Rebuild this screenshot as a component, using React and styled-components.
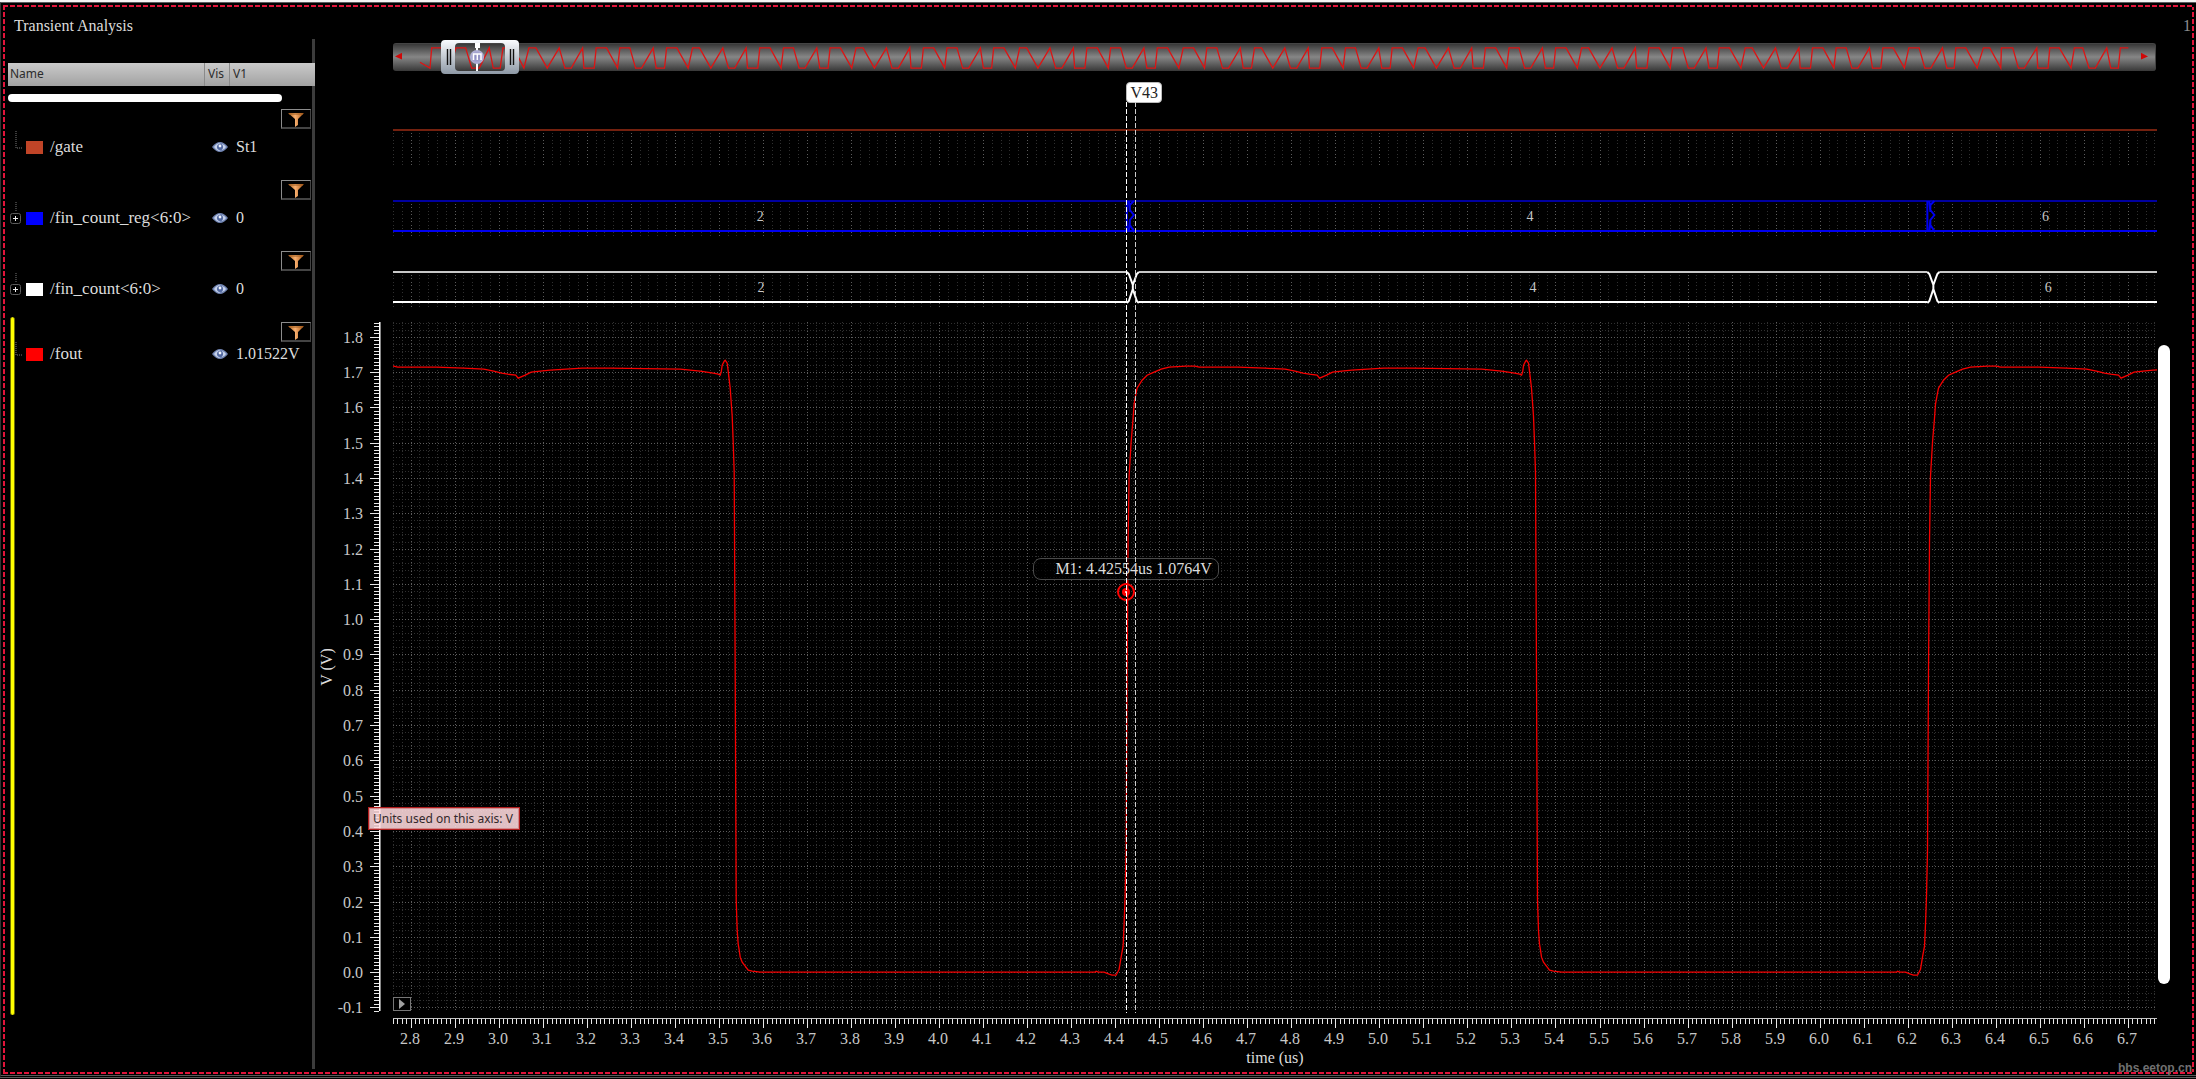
import React, { useLayoutEffect, useRef, useState } from 'react'
import styled, { createGlobalStyle } from 'styled-components'

const SERIF = '"Liberation Serif", "Times New Roman", serif'
const SANS = '"Noto Sans", "Open Sans", sans-serif'

// visible window of the chart
const T_MIN = 2.76
const T_MAX = 6.766
const V_MIN = -0.11
const V_MAX = 1.842

const signals = [
  { name: '/gate', color: '#c04427', value: 'St1', line: 36 },
  { name: '/fin_count_reg<6:0>', color: '#0000ff', value: '0', bus: true, line: 36 },
  { name: '/fin_count<6:0>', color: '#ffffff', value: '0', bus: true, line: 36 },
  { name: '/fout', color: '#ff0000', value: '1.01522V', line: 24 },
]

// one period of /fout as [time, level], 440.4 steps per us and 353 per volt
const PERIOD = 801.5
const T_ORIGIN = 3.0443
const CYCLE = [
  [0, 594], [7, 597], [13, 600], [22, 601], [32, 602], [64, 604], [92, 604], [162, 603],
  [182, 601], [195, 599], [200, 598], [202, 597], [203, 600], [204, 607], [206, 611],
  [207, 612], [209, 609], [210, 601], [212, 584], [213, 570], [214, 556], [215, 530],
  [216, 500], [217, 300], [218, 72], [219, 42], [220, 28], [221, 22], [222, 15], [224, 10],
  [227, 6], [230, 2], [234, 1], [242, 0], [577, 0], [578, 1], [580, 0], [586, 0], [591, -2],
  [594, -3], [598, -3], [601, 3], [603, 15], [605, 26], [606, 48], [607, 76], [608, 122],
  [609, 300], [610, 430], [611, 496], [613, 530], [615, 554], [616, 568], [618, 579],
  [619, 584], [624, 592], [629, 597], [636, 600], [643, 603], [651, 605], [668, 606],
  [677, 606], [681, 605], [720, 605], [747, 604], [767, 603], [777, 601], [785, 599],
  [791, 598], [799, 597],
]

// overview trace, t = top, b = bottom, positions in thirds of a pixel
const PATTERN = [
  [0, 't'], [21, 't'], [55, 'b'], [91, 't'], [108, 'b'], [127, 'b'], [161, 't'], [165, 'b'],
  [196, 'b'], [202, 't'], [233, 't'], [266, 'b'], [273, 't'], [303, 't'], [320, 'b'],
  [338, 'b'], [373, 't'], [382, 'b'], [407, 'b'], [413, 't'], [444, 't'], [478, 'b'],
]
const HEAD = [
  [81, 'm'], [111, 'b'], [116, 't'], [150, 't'], [170, 'b'], [189, 't'], [218, 't'], [236, 'b'],
  [259, 'b'], [289, 't'], [301, 'b'], [322, 'b'], [330, 't'], [362, 't'], [393, 'b'],
]
const TAIL = [
  [215, 't'], [240, 't'], [257, 'b'], [275, 'b'], [310, 't'], [323, 'b'], [345, 'b'],
  [350, 't'], [380, 't'], [414, 'b'], [433, 't'], [452, 't'], [485, 'b'], [487, 't'],
  [521, 't'], [538, 'b'], [556, 'b'], [593, 't'], [596, 'b'], [627, 'b'], [632, 't'],
  [661, 't'], [696, 'b'], [706, 't'], [731, 't'], [750, 'b'], [769, 'b'], [803, 't'],
  [815, 'b'], [838, 'b'], [844, 't'], [868, 't'],
]
const LEVEL = { t: 4, m: 19, b: 25 }

const overviewPoints = () => {
  const short = PATTERN.filter(p => p[0] >= 202 && p[0] < 413)
  const pts = [...HEAD]
  let x = 408
  for (let i = 0; i < 9; i++) {
    if (i === 4) {
      short.forEach(p => pts.push([x + p[0] - 202, p[1]]))
      x += 214
    }
    const start = x
    PATTERN.forEach(p => pts.push([start + p[0], p[1]]))
    x += 491
  }
  const tail = TAIL.map(p => [p[0] + 4341, p[1]])
  return pts
    .filter(p => p[0] < tail[0][0])
    .concat(tail)
    .map(p => `${(p[0] / 3).toFixed(1)},${LEVEL[p[1]]}`)
    .join(' ')
}

const range = (from, to) => Array.from({ length: to - from + 1 }, (_, i) => from + i)
const timeTicks = step => range(Math.ceil(T_MIN / step), Math.floor(T_MAX / step))
const voltTicks = step => range(Math.ceil(V_MIN / step), Math.floor(V_MAX / step))
const timeShare = t => (t - T_MIN) / (T_MAX - T_MIN)
const voltShare = v => (V_MAX - v) / (V_MAX - V_MIN)

const useSize = () => {
  const ref = useRef(null)
  const [size, setSize] = useState({ width: 0, height: 0 })
  useLayoutEffect(() => {
    const measure = () => {
      const box = ref.current.getBoundingClientRect()
      setSize({ width: box.width, height: box.height })
    }
    measure()
    const observer = new ResizeObserver(measure)
    observer.observe(ref.current)
    return () => observer.disconnect()
  }, [])
  return [ref, size]
}

const GlobalStyle = createGlobalStyle`
  * {
    box-sizing: border-box;
  }
  body {
    margin: 0;
    background: #000;
    color: #dcdcdc;
    font-family: ${SERIF};
    font-size: 16px;
    line-height: 20px;
  }
  button {
    margin: 0px;
    padding: 0px;
    border: none;
    background: none;
    color: inherit;
  }
`

const Page = styled.div`
  display: flex;
  flex-direction: column;
  height: 100vh;
  min-height: 640px;
  padding-bottom: 1px;
  border-top: 2px solid #f4f4f4;
`

const Window = styled.div`
  display: flex;
  flex: 1;
  min-height: 0;
  padding: 2px 2px 1px;
  border-top: 1px solid #5a5a5e;
  border-left: 1px solid #333;
  border-bottom: 3px double #5a5a5a;
`

const dash = angle => `repeating-linear-gradient(${angle}, #e0143a 0 5px, #000 5px 7px)`

const DashedFrame = styled.main`
  position: relative;
  display: grid;
  grid-template-columns: 304px 3px 1fr;
  flex: 1;
  min-width: 0;
  padding: 2px 0px 0px 5px;
  background:
    ${dash('90deg')} top / 100% 2px no-repeat,
    ${dash('90deg')} bottom / 100% 2px no-repeat,
    ${dash('180deg')} left / 2px 100% no-repeat,
    ${dash('180deg')} right / 2px 100% no-repeat;
`

const Sidebar = styled.section`
  position: relative;
  z-index: 1;
  h1 {
    height: 56px;
    margin: 0px;
    padding: 9px 6px;
    font-size: 16px;
    font-weight: normal;
  }
`

const Divider = styled.div`
  margin: 32px 0px 5px;
  background: #3c3c3c;
`

const SignalTable = styled.table`
  width: 307px;
  table-layout: fixed;
  border-collapse: collapse;
  th {
    height: 23px;
    padding: 0px 2px;
    background: linear-gradient(#cacaca, #a2a2a2);
    color: #2c2c2c;
    font: 12px/21px ${SANS};
    text-align: left;
    vertical-align: top;
  }
  th + th {
    box-shadow: inset 1px 0 #8a8a8a;
    padding-left: 4px;
  }
  td {
    padding: 0px;
    vertical-align: top;
    white-space: nowrap;
  }
`

const ScrollCell = styled.td`
  height: 23px;
  div {
    width: 274px;
    height: 8px;
    margin-top: 8px;
    border-radius: 4px;
    background: #fff;
  }
`

const FilterCell = styled.td`
  height: 20px;
  text-align: right;
`

const FilterButton = styled.button`
  display: block;
  width: 30px;
  height: 20px;
  margin-left: auto;
  margin-right: 4px;
  border: 1px solid #8c8c8c;
  border-right-color: #444;
  border-bottom: 2px solid #444;
  svg {
    display: block;
    margin: 2px auto 0px;
  }
`

const SignalRow = styled.tr`
  height: 51px;
  line-height: ${pr => pr.$line}px;
`

const NameCell = styled.div`
  display: flex;
  align-items: center;
  height: ${pr => pr.$line}px;
  padding-left: 2px;
  font-size: 17px;
`

const Swatch = styled.span`
  width: 17px;
  height: 13px;
  margin: 0px 7px 0px 4px;
  background: ${pr => pr.$color};
`

const VisButton = styled.button`
  display: flex;
  align-items: center;
  height: ${pr => pr.$line}px;
  padding-left: 8px;
`

const ValueCell = styled.td`
  && {
    padding-left: 7px;
  }
`

const Expander = styled.button`
  display: block;
  width: 12px;
  height: 36px;
  svg {
    display: block;
  }
`

const SelectedBar = styled.div`
  position: absolute;
  left: 2px;
  top: 310px;
  bottom: 59px;
  width: 5px;
  border: 1px solid #6e6e00;
  border-width: 0px 1px;
  border-radius: 3px;
  background: #ff0;
`

const Scope = styled.section`
  display: flex;
  flex-direction: column;
  min-width: 0;
`

const TopRow = styled.div`
  height: 36px;
  padding: 9px 3px;
  color: #8e8e8e;
  text-align: right;
`

const Overview = styled.div`
  position: relative;
  height: 28px;
  margin: 0px 38px 0px 78px;
  border: 1px solid #444;
  border-width: 1px 1px 0px 0px;
  border-radius: 3px;
  background: linear-gradient(#383838, #868686 48%, #383838);
  svg {
    display: block;
  }
`

const OverviewHandle = styled.button`
  position: absolute;
  left: 48px;
  top: -4px;
  width: 78px;
  height: 34px;
`

const Traces = styled.div`
  position: relative;
  display: flex;
  flex: 1;
  flex-direction: column;
  min-height: 0;
  margin-top: 11px;
  padding-top: 47px;
`

const Strip = styled.div`
  display: grid;
  grid-template-columns: 78px minmax(0, 1fr) 37px;
  height: 37px;
  margin-bottom: ${pr => pr.$gap}px;
`

const MainStrip = styled(Strip)`
  flex: 1;
  height: auto;
  min-height: 0;
`

const PlotBox = styled.div`
  position: relative;
  grid-column: 2;
  min-height: 0;
`

const Chart = styled.svg`
  position: absolute;
  display: block;
  width: 100%;
  height: 100%;
  font-family: ${SERIF};
  fill: #c8c8c8;
  overflow: ${pr => (pr.$open ? 'visible' : 'hidden')};
`

const YAxisBox = styled.div`
  position: relative;
`

const YTitle = styled.div`
  position: absolute;
  left: 2px;
  top: 50%;
  writing-mode: vertical-rl;
  transform: translateY(-50%) rotate(180deg);
`

const Tooltip = styled.div`
  position: absolute;
  z-index: 2;
  left: 53px;
  bottom: 181px;
  padding: 0px 6px 0px 4px;
  border: 1px solid #b01c1c;
  box-shadow: inset 0 0 0 1px rgba(190, 60, 60, 0.4);
  background: rgba(255, 219, 222, 0.88);
  color: #33282a;
  font: 12px/21px ${SANS};
  white-space: nowrap;
`

const VScroll = styled.div`
  width: 12px;
  margin: 23px 0px 27px 1px;
  border-radius: 6px;
  background: #fff;
`

const PlayButton = styled.button`
  position: absolute;
  left: 0px;
  bottom: 0px;
  width: 18px;
  height: 14px;
  border: 1px solid #777;
  background: #000;
  svg {
    display: block;
    margin: 1px auto;
  }
`

const XAxis = styled.div`
  height: 56px;
  padding: 0px 37px 0px 78px;
`

const XAxisBox = styled.div`
  position: relative;
  height: 30px;
`

const XTitle = styled.div`
  text-align: center;
  line-height: 20px;
`

const CursorLayer = styled.div`
  position: absolute;
  left: 78px;
  right: 37px;
  top: 0px;
  bottom: 61px;
  pointer-events: none;
`

const CursorLine = styled.div`
  position: absolute;
  top: 20px;
  bottom: 0px;
  width: 1px;
  background: repeating-linear-gradient(${pr => pr.$color} 0 5px, transparent 5px 7px);
`

const CursorTag = styled.span`
  position: absolute;
  top: 0px;
  padding: 0px 3px;
  border: 1px solid #bbb;
  border-radius: 4px;
  background: #fff;
  color: #222;
  line-height: 19px;
`

const MarkerDot = styled.svg`
  position: absolute;
  margin: -10px 0px 0px -10px;
`

const MarkerTag = styled.div`
  position: absolute;
  width: 186px;
  height: 22px;
  margin: -34px 0px 0px -93px;
  padding-left: 21px;
  border: 1px solid #4a4a4a;
  border-radius: 8px;
  background: rgba(0, 0, 0, 0.7);
  white-space: nowrap;
`

const Watermark = styled.div`
  position: absolute;
  right: 2px;
  bottom: -3px;
  color: #707070;
  font: bold 12px/18px "Liberation Sans", sans-serif;
`

const FunnelIcon = () => (
  <svg width="16" height="14" viewBox="0 0 16 14">
    <defs>
      <linearGradient id="funnel" x1="0" x2="1">
        <stop offset="0" stopColor="#b06018" />
        <stop offset="0.45" stopColor="#f8b070" />
        <stop offset="1" stopColor="#a85410" />
      </linearGradient>
    </defs>
    <path d="M0 0h16l-6 6v6l-3 2V6z" fill="url(#funnel)" />
    <path d="M1 1h14" stroke="#9a5a20" />
  </svg>
)

const EyeIcon = () => (
  <svg width="16" height="12" viewBox="0 0 16 12">
    <path d="M0 6Q4 1 8 1t8 5q-4 5-8 5T0 6z" fill="#7286b4" />
    <path d="M2 6q3-4 6-4-2 2-2 4t2 4q-3 0-6-4zM10 3q3 1 4 3-1 2-4 3 1-3 0-6z" fill="#c6d2ea" />
    <circle cx="8" cy="6" r="3" fill="#5268a0" />
    <circle cx="8" cy="5" r="1.4" fill="#f2f6ff" />
  </svg>
)

const TreeGlyph = ({ bus, line }) => (
  <svg width="12" height={line} viewBox={`0 ${18 - line / 2} 12 ${line}`} fill="none">
    <path d={bus ? 'M6 2v10' : 'M6 2v17h6'} stroke="#777" strokeDasharray="1 1" />
    {bus && <rect x="0.5" y="13.5" width="10" height="10" rx="2" stroke="#5c5c5c" />}
    {bus && <path d="M3 18.500h5M5.500 16v5" stroke="#eee" />}
  </svg>
)

const Signal = ({ signal }) => (
  <>
    <tr>
      <FilterCell colSpan={3}>
        <FilterButton aria-label={`Filter ${signal.name}`}><FunnelIcon /></FilterButton>
      </FilterCell>
    </tr>
    <SignalRow $line={signal.line}>
      <td>
        <NameCell $line={signal.line}>
          {signal.bus
            ? <Expander aria-label={`Expand ${signal.name}`}><TreeGlyph bus line={36} /></Expander>
            : <TreeGlyph line={signal.line} />}
          <Swatch $color={signal.color} />
          {signal.name}
        </NameCell>
      </td>
      <td>
        <VisButton $line={signal.line} aria-label={`Show ${signal.name}`}><EyeIcon /></VisButton>
      </td>
      <ValueCell>{signal.value}</ValueCell>
    </SignalRow>
  </>
)

const TimeGrid = ({ width, top, bottom, dots }) => (
  <g shapeRendering="crispEdges" strokeDasharray={dots}>
    <path d={`M0.500 ${top}V${bottom}`} stroke="#4a4a4a" />
    {timeTicks(0.02).map(i => {
      const x = Math.round(timeShare(i * 0.02) * width) + 0.5
      return <path key={i} d={`M${x} ${top}V${bottom}`} stroke={i % 5 ? '#303030' : '#5c5c5c'} />
    })}
  </g>
)

const GateStrip = () => {
  const [ref, { width }] = useSize()
  return (
    <PlotBox ref={ref}>
      <Chart>
        <TimeGrid width={width} top={4} bottom={36} dots="1 2 1 3" />
        <rect width={width} height="2" fill="#74210f" />
      </Chart>
    </PlotBox>
  )
}

const Crossing = ({ x, kind, color }) => (
  kind === 'x'
    ? (
      <>
        <rect x={x} width="12" height="34" fill="#000" />
        <path
          d={`M${x} 1l2 2 4 11v4l-4 12-2 2M${x + 12} 1l-2 2-4 11v4l4 12 2 2`}
          fill="none"
          stroke={color}
          strokeWidth="2"
        />
      </>
    )
    : (
      <path
        d={`M${x} 1v30M${x + 7} 1l-4 4v5l4 5-4 5v5l4 6M${x + 2} 1l1 11M${x + 3} 20l-1 11`}
        fill="none"
        stroke={color}
        strokeWidth="2"
      />
    )
)

const BusStrip = ({ color, topColor, kind, labels }) => {
  const [ref, { width }] = useSize()
  return (
    <PlotBox ref={ref}>
      <Chart>
        <TimeGrid width={width} top={4} bottom={36} dots="1 2 1 3" />
        <rect width={width} height="2" fill={topColor} />
        <rect y="30" width={width} height="2" fill={color} />
        {[4.4265, 6.2445].map(t => (
          <Crossing key={t} x={timeShare(t) * width} kind={kind} color={color} />
        ))}
        {labels.map(([t, text]) => (
          <text key={text} x={timeShare(t) * width} y="21" fontSize="14" textAnchor="middle">{text}</text>
        ))}
      </Chart>
    </PlotBox>
  )
}

const FoutPlot = () => {
  const [ref, { width, height }] = useSize()
  const points = range(-1, 4).flatMap(n => CYCLE.map(([dx, dy]) => {
    const t = T_ORIGIN + (n * PERIOD + dx) / 440.4
    return `${(timeShare(t) * width).toFixed(1)},${(voltShare(dy / 353) * height).toFixed(1)}`
  })).join(' ')
  return (
    <PlotBox ref={ref}>
      <Chart>
        <TimeGrid width={width} top={0} bottom={height} dots="1 2" />
        <g shapeRendering="crispEdges" strokeDasharray="1 2">
          {voltTicks(0.02).map(i => {
            const y = Math.round(voltShare(i * 0.02) * height) + 0.5
            return <path key={i} d={`M0 ${y}H${width}`} stroke={i % 5 ? '#303030' : '#5c5c5c'} />
          })}
        </g>
        <polyline points={points} fill="none" stroke="#f80000" strokeWidth="1.300" />
      </Chart>
      <MarkerTag style={{ left: `${timeShare(4.42554) * 100}%`, top: `${voltShare(1.0764) * 100}%` }}>
        M1: 4.42554us 1.0764V
      </MarkerTag>
      <MarkerDot
        width="20"
        height="20"
        style={{ left: `${timeShare(4.42554) * 100}%`, top: `${voltShare(1.0764) * 100}%` }}
      >
        <circle cx="10" cy="10" r="8" fill="none" stroke="#f00" strokeWidth="2" />
        <circle cx="10" cy="10" r="4" fill="#f00" />
        <circle cx="10" cy="10" r="1" fill="#fff" />
      </MarkerDot>
      <PlayButton aria-label="Play">
        <svg width="8" height="10"><path d="M1 0l6 5-6 5z" fill="#a0a0a0" /></svg>
      </PlayButton>
    </PlotBox>
  )
}

const YAxis = () => {
  const [ref, { height }] = useSize()
  return (
    <YAxisBox ref={ref}>
      <Chart $open>
        <g shapeRendering="crispEdges">
          <rect x="64" width="1" height={height} fill="#fff" />
          <rect x="65" width="1" height={height} fill="#888" />
          {voltTicks(0.01).map(i => {
            const y = Math.round(voltShare(i * 0.01) * height)
            return <rect key={i} x={i % 10 ? 59 : 55} y={y} width={i % 10 ? 5 : 9} height="1" fill="#e8e8e8" />
          })}
        </g>
        {voltTicks(0.1).map(i => (
          <text key={i} x="48" y={Math.round(voltShare(i * 0.1) * height) + 6} fontSize="16" textAnchor="end">
            {(i / 10).toFixed(1)}
          </text>
        ))}
      </Chart>
      <YTitle>V (V)</YTitle>
      <Tooltip role="tooltip">Units used on this axis: V</Tooltip>
    </YAxisBox>
  )
}

const TimeAxis = () => {
  const [ref, { width }] = useSize()
  return (
    <XAxisBox ref={ref}>
      <Chart $open>
        <g shapeRendering="crispEdges">
          <rect width={width} height="1" fill="#c4c4c4" />
          {timeTicks(0.01).map(i => {
            const x = Math.round(timeShare(i * 0.01) * width)
            return <rect key={i} x={x} y="1" width="1" height={i % 10 ? 5 : 9} fill="#e8e8e8" />
          })}
        </g>
        {timeTicks(0.1).map(i => (
          <text key={i} x={Math.round(timeShare(i * 0.1) * width) - 1} y="26" fontSize="16" textAnchor="middle">
            {(i / 10).toFixed(1)}
          </text>
        ))}
      </Chart>
    </XAxisBox>
  )
}

const OverviewBar = () => (
  <Overview>
    <svg width="100%" height="27" viewBox="0 0 1763 28" preserveAspectRatio="none">
      <polyline points={overviewPoints()} fill="none" stroke="#dc1414" strokeWidth="1.300" />
      <path d="M2 13l7-4v7zM1749 9l7 4-7 3z" fill="#d00808" />
    </svg>
    <OverviewHandle aria-label="Visible range">
      <svg width="78" height="34">
        <defs>
          <linearGradient id="handle" x2="0" y2="1">
            <stop offset="0" stopColor="#fafcff" />
            <stop offset="1" stopColor="#8e99a6" />
          </linearGradient>
          <radialGradient id="knob">
            <stop offset="0" stopColor="#8484bc" />
            <stop offset="1" stopColor="#b4b4d8" />
          </radialGradient>
        </defs>
        <path
          d="M4 0h70q4 0 4 4v26q0 4-4 4H4q-4 0-4-4V4q0-4 4-4zM18 3q-4 0-4 4v20q0 4 4 4h42q4 0 4-4V7q0-4-4-4z"
          fill="url(#handle)"
          fillRule="evenodd"
        />
        <path d="M6.500 9v16M9.500 9v16M69.500 9v16M72.500 9v16" stroke="#111" strokeWidth="1.400" />
        <path d="M34 3h5v5h-2v23h-2V8h-1z" fill="#fff" />
        <circle cx="36" cy="17" r="7" fill="url(#knob)" />
        <path d="M32.500 20v-6h7.500v6M36.300 14v6" stroke="#fff" strokeWidth="1.500" fill="none" />
      </svg>
    </OverviewHandle>
  </Overview>
)

const App = () => (
  <Page>
    <GlobalStyle />
    <Window>
      <DashedFrame>
        <Sidebar>
          <h1>Transient Analysis</h1>
          <SignalTable>
            <colgroup>
              <col width="196" />
              <col width="25" />
              <col />
            </colgroup>
            <thead>
              <tr><th>Name</th><th>Vis</th><th>V1</th></tr>
            </thead>
            <tbody>
              <tr><ScrollCell colSpan={3}><div /></ScrollCell></tr>
              {signals.map(signal => <Signal key={signal.name} signal={signal} />)}
            </tbody>
          </SignalTable>
          <SelectedBar />
        </Sidebar>
        <Divider />
        <Scope>
          <TopRow>1</TopRow>
          <OverviewBar />
          <Traces>
            <Strip $gap={34}><GateStrip /></Strip>
            <Strip $gap={34}>
              <BusStrip color="#0000f0" topColor="#0000a0" labels={[[3.594, '2'], [5.342, '4'], [6.513, '6']]} />
            </Strip>
            <Strip $gap={14}>
              <BusStrip kind="x" color="#ffffff" topColor="#c8c8c8" labels={[[3.596, '2'], [5.349, '4'], [6.519, '6']]} />
            </Strip>
            <MainStrip $gap={7}>
              <YAxis />
              <FoutPlot />
              <VScroll />
            </MainStrip>
            <XAxis>
              <TimeAxis />
              <XTitle>time (us)</XTitle>
            </XAxis>
            <CursorLayer>
              <CursorTag style={{ left: `${timeShare(4.42554) * 100}%` }}>V43</CursorTag>
              <CursorLine $color="#fff" style={{ left: `${timeShare(4.42554) * 100}%` }} />
              <CursorLine $color="#ccc" style={{ left: `${timeShare(4.446) * 100}%` }} />
            </CursorLayer>
          </Traces>
        </Scope>
        <Watermark>bbs.eetop.cn</Watermark>
      </DashedFrame>
    </Window>
  </Page>
)

export default App
